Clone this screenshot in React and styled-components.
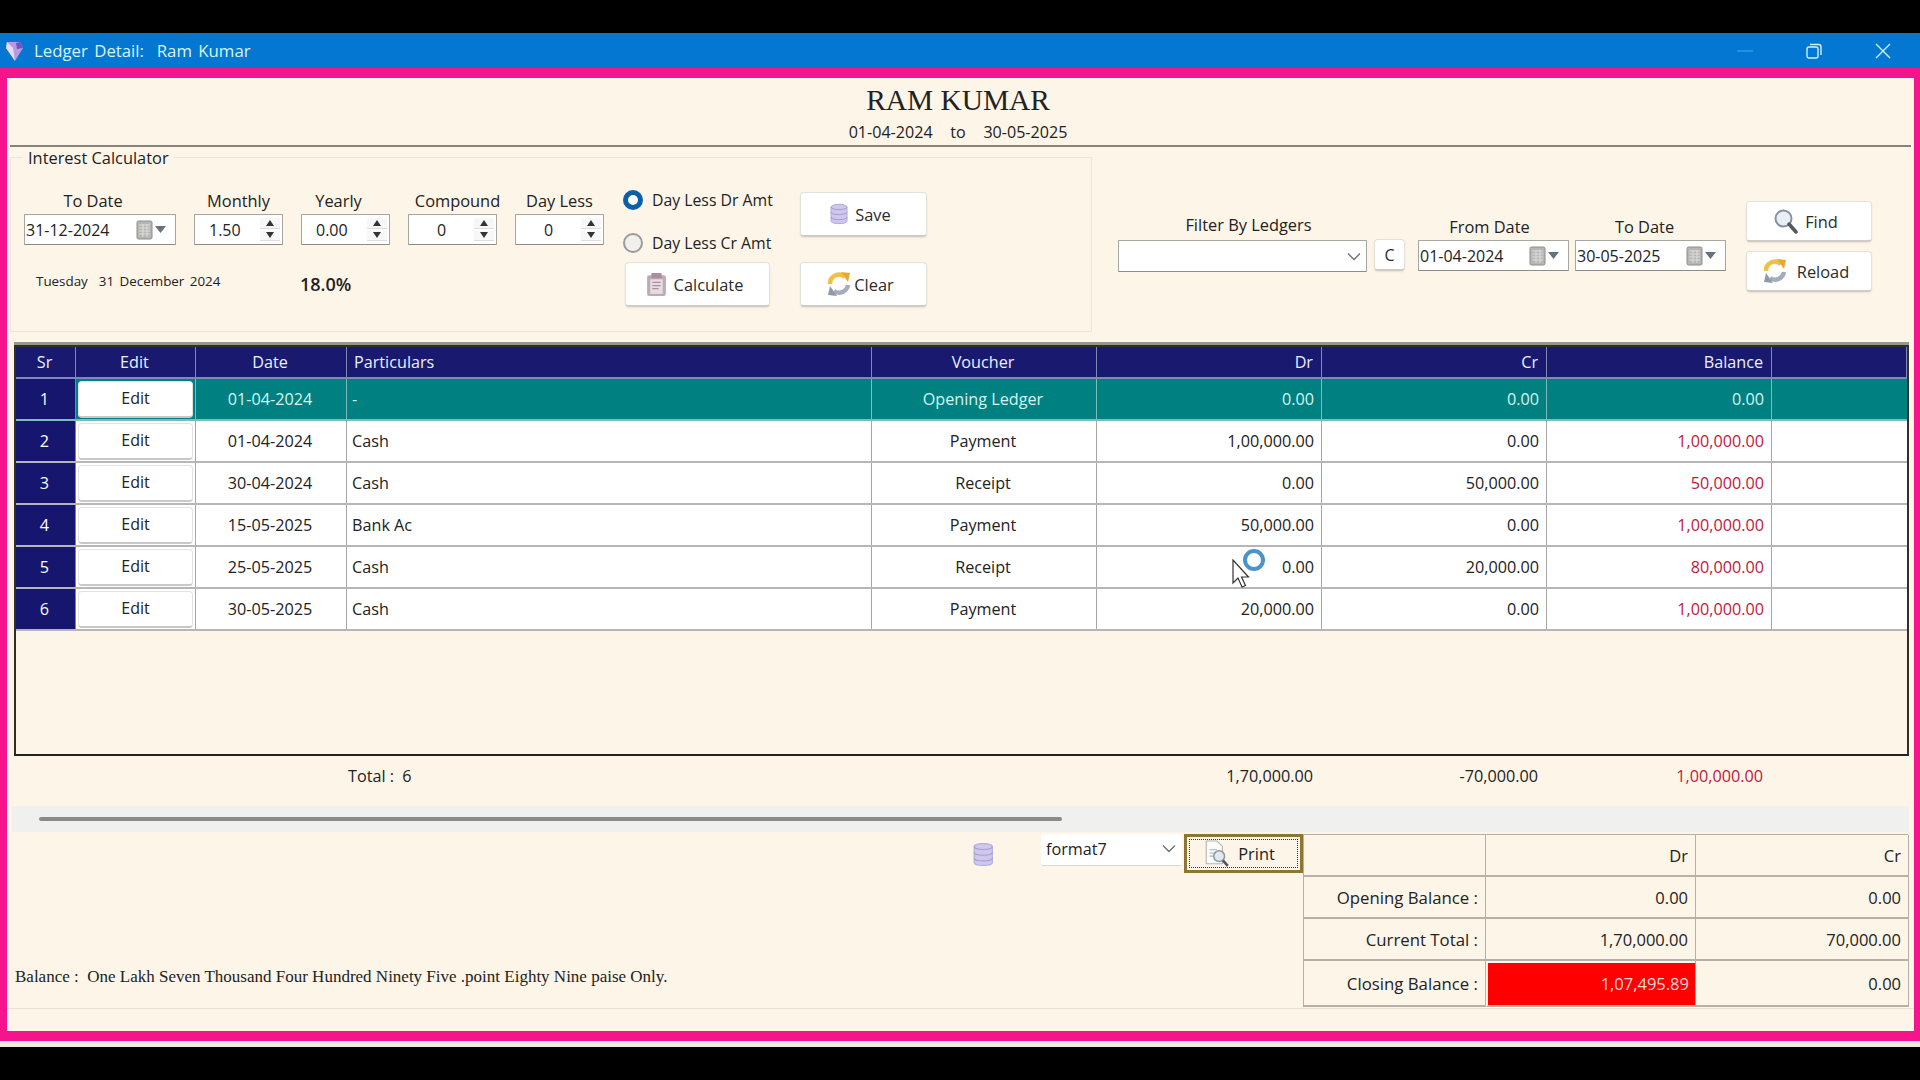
import React from 'react';
import styled, { createGlobalStyle } from 'styled-components';

const UI_FONT = '"Open Sans", "Noto Sans", sans-serif';
const COLS = '60px 120px 151px 525px 225px 225px 225px 225px 135px';

const Global = createGlobalStyle`
  html, body { margin: 0; padding: 0; background: #000; overflow: hidden; }
  * { box-sizing: border-box; }
  body { font-family: ${UI_FONT}; font-size: 16px; color: #222; }
`;

const Screen = styled.div`
  position: relative;
  width: 1920px;
  height: 1080px;
  background: #000;
  padding-top: 33px;
  display: flex;
  flex-direction: column;
`;

const TitleBar = styled.div`
  height: 35px;
  background: #0477d2;
  color: #d8f4ff;
  display: flex;
  align-items: center;
  padding-left: 4px;
  font-size: 16.8px;
`;

const TitleText = styled.span`
  margin-left: 10px;
  white-space: pre;
  word-spacing: 2px;
`;

const WinButtons = styled.div`
  margin-left: auto;
  display: flex;
  align-items: center;
  gap: 53px;
  padding-right: 29px;
`;

const Window = styled.div`
  height: 973px;
  background: #fdf5e8;
  border-style: solid;
  border-color: #f5148c;
  border-width: 10px 6px 10px 7px;
  display: flex;
  flex-direction: column;
`;

const BottomStrip = styled.div`
  height: 6px;
  background: #eee8e2;
`;

const Heading = styled.div`
  height: 69px;
  text-align: center;
  border-bottom: 2px solid #87827a;
  margin: 0 3px;
  padding-right: 5px;
`;

const Name = styled.div`
  font-family: "Liberation Serif", serif;
  font-size: 29.4px;
  line-height: 34px;
  padding-top: 5px;
  color: #222;
  height: 40px;
`;

const Period = styled.div`
  font-size: 16.1px;
  line-height: 20px;
  margin-top: 4px;
  word-spacing: 13.5px;
`;

const TopSection = styled.div`
  height: 195px;
  display: flex;
  align-items: flex-start;
  padding-left: 3px;
`;

const Calc = styled.fieldset`
  width: 1082px;
  height: 184px;
  margin: 1px 0 0;
  padding: 25px 0 0 13px;
  border: 1px solid #ebe5da;
  display: flex;
  min-width: 0;
`;

const CalcLegend = styled.legend`
  margin-left: -1px;
  padding: 1px 5px 0;
  font-size: 16.4px;
  line-height: 18px;
  color: #222;
`;

const CalcLeft = styled.div`
  width: 583px;
  display: flex;
  flex-direction: column;
`;

const Fields = styled.div`
  display: flex;
  gap: 18px;
`;

const Field = styled.div`
  width: ${(p) => p.$w}px;
  display: flex;
  flex-direction: column;
  align-items: center;
  gap: ${(p) => p.$gap || 4}px;
`;

const FieldLabel = styled.label`
  font-size: 16.4px;
  line-height: 18px;
  color: #222;
  white-space: nowrap;
  margin-left: ${(p) => (p.$nudge > 0 ? p.$nudge * 2 : 0)}px;
  margin-right: ${(p) => (p.$nudge < 0 ? -p.$nudge * 2 : 0)}px;
`;

const InputBox = styled.div`
  width: ${(p) => p.$w}px;
  height: ${(p) => p.$h || 31}px;
  background: #fff;
  border: 1px solid #a9a69f;
  border-bottom-color: #8f8c85;
  border-radius: 1px;
  display: flex;
  align-items: center;
  font-size: 16px;
  color: #222;
`;

const DateText = styled.span`
  flex: 1;
  padding-left: 1px;
`;

const SpinValue = styled.span`
  flex: 1;
  text-align: ${(p) => (p.$center ? 'center' : 'left')};
  padding-left: ${(p) => (p.$center ? '0' : '14px')};
`;

const SpinButtons = styled.div`
  width: 20px;
  height: 100%;
  margin-right: 2px;
  padding: 3px 0;
  display: flex;
  flex-direction: column;
  gap: 2px;
`;

const SpinArrow = styled.div`
  flex: 1;
  display: flex;
  align-items: center;
  justify-content: center;
  background: #f7f7f7;
  border-bottom: 1px solid #ddd;
  &::before {
    content: '';
    border-left: 4px solid transparent;
    border-right: 4px solid transparent;
    ${(p) => (p.$down ? 'border-top: 6px solid #333;' : 'border-bottom: 6px solid #333;')}
  }
`;

const InfoRow = styled.div`
  display: flex;
  align-items: flex-start;
  margin-top: 26px;
  padding-left: 12px;
`;

const DayText = styled.span`
  width: 264px;
  font-size: 13.4px;
  line-height: 20px;
  word-spacing: 2px;
  white-space: pre;
`;

const Rate = styled.span`
  font-size: 18px;
  font-weight: 600;
  line-height: 24px;
  margin-top: 1px;
`;

const CalcRight = styled.div`
  margin-left: 16px;
  display: grid;
  grid-template-columns: 177px 127px;
  grid-template-rows: 70px 45px;
`;

const RadioStack = styled.div`
  display: flex;
  flex-direction: column;
  gap: 21px;
  margin-top: -3px;
`;

const RadioRow = styled.div`
  display: flex;
  align-items: center;
  gap: 9px;
  font-size: 15.8px;
  height: 22px;
  white-space: nowrap;
`;

const Radio = styled.span`
  width: 20px;
  height: 20px;
  border-radius: 50%;
  background: ${(p) => (p.$on ? '#fff' : '#f2f0ec')};
  border: ${(p) => (p.$on ? '5px solid #0b5fa8' : '2px solid #9a9a98')};
`;

const Button = styled.button`
  width: ${(p) => p.$w}px;
  height: ${(p) => p.$h || 45}px;
  margin-left: ${(p) => p.$ml || 0}px;
  background: #fff;
  border: 1px solid #e4e1dc;
  border-bottom: 2px solid #cfccc6;
  border-radius: 4px;
  box-shadow: 0 1px 2px rgba(0, 0, 0, 0.08);
  display: flex;
  align-items: center;
  justify-content: center;
  gap: ${(p) => p.$gap || 7}px;
  font-family: ${UI_FONT};
  font-size: 16.4px;
  color: #2b2b2b;
  padding: 0 6px 0 0;
`;

const FilterFields = styled.div`
  display: flex;
  align-items: flex-start;
  margin: 69px 0 0 26px;
`;

const ClearFilter = styled(Button)`
  margin: 23px 13px 0 7px;
  font-size: 16px;
  padding: 0;
`;

const DateGroup = styled.div`
  display: flex;
  gap: 6px;
  padding-top: 2px;
`;

const ComboArrow = styled.span`
  margin-left: auto;
  padding-right: ${(p) => p.$pr || 5}px;
  display: flex;
`;

const FilterActions = styled.div`
  margin: 54px 0 0 20px;
  display: flex;
  flex-direction: column;
  gap: 9px;
`;

const GridFrame = styled.div`
  height: 411px;
  margin: 3px 5px 0 7px;
  border: 2px solid #2f2f2b;
  border-bottom-color: #222;
  box-shadow: 0 -3px 0 #98958e;
`;

const GridRow = styled.div`
  display: grid;
  grid-template-columns: ${COLS};
  height: ${(p) => p.$h || 42}px;
  background: ${(p) => p.$bg || '#fff'};
  color: ${(p) => p.$fg || '#222'};
  border-bottom: 2px solid ${(p) => p.$line || '#b6b6b6'};
`;

const Cell = styled.div`
  display: flex;
  align-items: center;
  justify-content: ${(p) => p.$justify || 'flex-start'};
  padding: ${(p) => p.$pad || '0 5px'};
  border-right: 1px solid ${(p) => p.$line || '#a6a6a6'};
  color: ${(p) => p.$color || 'inherit'};
  font-size: 16.2px;
  white-space: nowrap;
`;

const SrCell = styled(Cell)`
  background: #16166e;
  color: #fff;
  justify-content: center;
  padding: 0 2px 0 0;
  border-right-color: #7c80b0;
`;

const EditButton = styled.button`
  width: 115px;
  height: 37px;
  margin-top: 1px;
  background: #fff;
  border: 1px solid #e2e2e2;
  border-bottom: 2px solid #c8c8c8;
  border-radius: 4px;
  font-family: ${UI_FONT};
  font-size: 16px;
  color: #222;
  padding: 0 0 3px;
`;

const TotalsRow = styled.div`
  display: grid;
  grid-template-columns: ${COLS};
  height: 50px;
  padding: 0 0 10px 9px;
  align-items: center;
  font-size: 16.2px;
`;

const TotalValue = styled.div`
  grid-column: ${(p) => p.$col};
  text-align: ${(p) => (p.$left ? 'left' : 'right')};
  padding: ${(p) => (p.$left ? '0 0 0 1px' : '0 9px 0 0')};
  color: ${(p) => p.$color || '#222'};
  white-space: pre;
`;

const ScrollBand = styled.div`
  height: 26px;
  margin: 0 5px 0 5px;
  padding-left: 27px;
  background: #f0f0ef;
  display: flex;
  align-items: center;
`;

const ScrollThumb = styled.div`
  width: 1023px;
  height: 4px;
  background: #8b8b8b;
  border-radius: 2px;
`;

const BottomRow = styled.div`
  height: 177px;
  padding: 2px 6px 0 8px;
  display: flex;
  align-items: flex-start;
  border-bottom: 1px solid #e8e3da;
`;

const WordsNote = styled.div`
  flex: 1;
  align-self: flex-end;
  padding-bottom: 21px;
  font-family: "Liberation Serif", serif;
  font-size: 17px;
  color: #222;
  white-space: pre;
`;

const DbMark = styled.div`
  width: 68px;
  padding-top: 8px;
`;

const FormatSelect = styled.div`
  width: 141px;
  height: 32px;
  background: #fff;
  border-bottom: 1px solid #d8d8d8;
  border-radius: 2px;
  display: flex;
  align-items: center;
  padding: 0 0 2px 5px;
  font-size: 16.2px;
  color: #222;
`;

const PrintButton = styled.button`
  width: 119px;
  height: 39px;
  margin-left: 2px;
  border: 3px solid #8d7632;
  background: #fdf5e8;
  padding: 2px;
  font-family: ${UI_FONT};
  font-size: 16.4px;
  color: #222;
`;

const PrintInner = styled.span`
  height: 100%;
  border: 1.5px dotted #333;
  display: flex;
  align-items: center;
  justify-content: center;
  gap: 8px;
  padding-right: 8px;
`;

const SummaryTable = styled.div`
  width: 605px;
  display: grid;
  grid-template-columns: 182px 210px 213px;
  grid-template-rows: 42px 42px 42px 46px;
  border-left: 1px solid #b5b1a8;
  border-top: 1px solid #b5b1a8;
`;

const SummaryCell = styled.div`
  display: flex;
  align-items: center;
  justify-content: flex-end;
  padding: ${(p) => (p.$danger ? '0 6px 0 0' : '0 7px 0 0')};
  border-right: 1px solid #b5b1a8;
  border-bottom: 2px solid #b5b1a8;
  ${(p) => p.$danger && 'border-left: 2px solid #fdf5e8;'}
  background: ${(p) => (p.$danger ? 'linear-gradient(#fdf5e8 0 2px, #ff0000 2px)' : 'transparent')};
  color: ${(p) => (p.$danger ? '#ffd8d8' : '#222')};
  font-size: ${(p) => (p.$label ? 16.8 : 16.5)}px;
  white-space: nowrap;
`;

const Pointer = styled.svg`
  position: absolute;
  left: 1232px;
  top: 559px;
`;

const BusyRing = styled.div`
  position: absolute;
  left: 1243px;
  top: 549px;
  width: 22px;
  height: 22px;
  border-radius: 50%;
  border: 4px solid #4a94cc;
`;

const Gem = () => (
  <svg width="20" height="22" viewBox="0 0 20 22">
    <path d="M3 2 L16 2 L19 8 L11 21 L2 8 Z" fill="#b59be0" />
    <path d="M3 2 L9 8 L11 21 L2 8 Z" fill="#e6dcf8" />
    <path d="M12 3 L16 2 L19 8 L13 9 Z" fill="#7a4fc0" />
  </svg>
);

const RestoreIcon = () => (
  <svg width="16" height="16" viewBox="0 0 16 16" fill="none" stroke="#cdf3ff" strokeWidth="1.4">
    <rect x="1" y="4" width="11" height="11" rx="2" />
    <path d="M4 1.5 H12.5 A2.5 2.5 0 0 1 15 4 V12" />
  </svg>
);

const CloseIcon = () => (
  <svg width="16" height="16" viewBox="0 0 16 16" stroke="#cdf3ff" strokeWidth="1.4">
    <path d="M1 1 L15 15 M15 1 L1 15" />
  </svg>
);

const MinIcon = () => (
  <svg width="16" height="16" viewBox="0 0 16 16" stroke="#3f9fe6" strokeWidth="1.2">
    <path d="M0 8 H16" />
  </svg>
);

const CalendarPicker = () => (
  <svg width="30" height="20" viewBox="0 0 30 20" style={{ marginRight: 9 }}>
    <rect x="1" y="1" width="15" height="18" rx="1.5" fill="#b6b6b4" stroke="#8e8e8c" />
    <path d="M3 5 H14 M3 8 H14 M3 11 H14 M3 14 H14 M7 4 V17 M11 4 V17" stroke="#e4e4e2" strokeWidth="0.8" />
    <path d="M19 6 H30 L24.5 13 Z" fill="#66727c" />
  </svg>
);

const DbIcon = ({ size = 22 }) => (
  <svg width={size * 0.82} height={size} viewBox="0 0 18 22">
    <path d="M1 4 C1 0.5 17 0.5 17 4 V18 C17 21.5 1 21.5 1 18 Z" fill="#cfc8ec" stroke="#b3abdc" />
    <path d="M1 4 C1 7.5 17 7.5 17 4 M1 9 C1 12.5 17 12.5 17 9 M1 14 C1 17.5 17 17.5 17 14" fill="none" stroke="#a69ed4" />
  </svg>
);

const ClipboardIcon = () => (
  <svg width="21" height="25" viewBox="0 0 20 24">
    <rect x="1" y="3" width="18" height="20" rx="2" fill="#bfa9b5" />
    <rect x="5" y="1" width="10" height="5" rx="1" fill="#a88f9d" />
    <rect x="4" y="7" width="12" height="14" fill="#e8dce2" />
    <path d="M6 10 H14 M6 13 H14 M6 16 H12" stroke="#a88f9d" strokeWidth="1.2" />
  </svg>
);

const RefreshIcon = () => (
  <svg width="24" height="26" viewBox="0 0 24 26" fill="none">
    <path d="M3 13 A9 9 0 0 1 18 6" stroke="#f0bf45" strokeWidth="4.5" />
    <path d="M14 1 L23 2 L21 11 Z" fill="#e9a92e" />
    <path d="M21 14 A9 9 0 0 1 7 20" stroke="#a3adbb" strokeWidth="4.5" />
    <path d="M10 25 L1 24 L3 15 Z" fill="#8f9aa9" />
  </svg>
);

const LensIcon = () => (
  <svg width="24" height="25" viewBox="0 0 24 25" fill="none">
    <circle cx="9.5" cy="9.5" r="8" fill="#e8eff7" stroke="#8a9098" strokeWidth="2" />
    <path d="M15 15 L22 23" stroke="#555a60" strokeWidth="3.5" strokeLinecap="round" />
  </svg>
);

const PrintIcon = () => (
  <svg width="26" height="28" viewBox="0 0 24 26" fill="none">
    <path d="M2 1 H12 L17 6 V22 H2 Z" fill="#fbfbfa" stroke="#b4b4b0" />
    <path d="M5 9 H12 M5 12 H10 M5 15 H10" stroke="#a9b4c0" />
    <circle cx="14" cy="15" r="5" fill="#dfe9f2" stroke="#8d969e" strokeWidth="1.4" />
    <path d="M17.5 19 L22 24" stroke="#4f555b" strokeWidth="2.5" />
  </svg>
);

const Chevron = () => (
  <svg width="14" height="9" viewBox="0 0 14 9" fill="none" stroke="#6d6d6d" strokeWidth="1.3">
    <path d="M1 1.5 L7 7.5 L13 1.5" />
  </svg>
);

const DateInput = ({ value, width = 152 }) => (
  <InputBox $w={width}>
    <DateText>{value}</DateText>
    <CalendarPicker />
  </InputBox>
);

const Spin = ({ value, center }) => (
  <InputBox $w={89}>
    <SpinValue $center={center}>{value}</SpinValue>
    <SpinButtons>
      <SpinArrow />
      <SpinArrow $down />
    </SpinButtons>
  </InputBox>
);

const spins = [
  { label: 'Monthly', value: '1.50' },
  { label: 'Yearly', value: '0.00', nudge: -7 },
  { label: 'Compound', value: '0', center: true, nudge: 5 },
  { label: 'Day Less', value: '0', center: true },
];

const rows = [
  { sr: 1, date: '01-04-2024', name: '-', voucher: 'Opening Ledger', dr: '0.00', cr: '0.00', bal: '0.00' },
  { sr: 2, date: '01-04-2024', name: 'Cash', voucher: 'Payment', dr: '1,00,000.00', cr: '0.00', bal: '1,00,000.00' },
  { sr: 3, date: '30-04-2024', name: 'Cash', voucher: 'Receipt', dr: '0.00', cr: '50,000.00', bal: '50,000.00' },
  { sr: 4, date: '15-05-2025', name: 'Bank Ac', voucher: 'Payment', dr: '50,000.00', cr: '0.00', bal: '1,00,000.00' },
  { sr: 5, date: '25-05-2025', name: 'Cash', voucher: 'Receipt', dr: '0.00', cr: '20,000.00', bal: '80,000.00' },
  { sr: 6, date: '30-05-2025', name: 'Cash', voucher: 'Payment', dr: '20,000.00', cr: '0.00', bal: '1,00,000.00' },
];

const headers = [
  ['Sr', 'center'],
  ['Edit', 'center'],
  ['Date', 'center'],
  ['Particulars', 'flex-start'],
  ['Voucher', 'center'],
  ['Dr', 'flex-end'],
  ['Cr', 'flex-end'],
  ['Balance', 'flex-end'],
  ['', 'flex-start'],
];

const RIGHT_PAD = '0 7px 0 0';
const CENTER_PAD = '0 2px 0 0';
const HEAD_LINE = '#8088b4';

const headPad = (justify) => {
  if (justify === 'flex-end') return '0 8px 0 0';
  if (justify === 'center') return CENTER_PAD;
  return '0 7px';
};

export default function App() {
  return (
    <Screen>
      <Global />
      <TitleBar>
        <Gem />
        <TitleText>Ledger Detail:  Ram Kumar</TitleText>
        <WinButtons>
          <MinIcon />
          <RestoreIcon />
          <CloseIcon />
        </WinButtons>
      </TitleBar>
      <Window>
        <Heading>
          <Name>RAM KUMAR</Name>
          <Period>01-04-2024 to 30-05-2025</Period>
        </Heading>

        <TopSection>
          <Calc>
            <CalcLegend>Interest Calculator</CalcLegend>
            <CalcLeft>
              <Fields>
                <Field $w={152}>
                  <FieldLabel $nudge={-7}>To Date</FieldLabel>
                  <DateInput value="31-12-2024" />
                </Field>
                {spins.map((s) => (
                  <Field key={s.label} $w={89}>
                    <FieldLabel $nudge={s.nudge}>{s.label}</FieldLabel>
                    <Spin value={s.value} center={s.center} />
                  </Field>
                ))}
              </Fields>
              <InfoRow>
                <DayText>Tuesday  31 December 2024</DayText>
                <Rate>18.0%</Rate>
              </InfoRow>
            </CalcLeft>
            <CalcRight>
              <RadioStack>
                <RadioRow>
                  <Radio $on />
                  Day Less Dr Amt
                </RadioRow>
                <RadioRow>
                  <Radio />
                  Day Less Cr Amt
                </RadioRow>
              </RadioStack>
              <Button $w={127}>
                <DbIcon />
                Save
              </Button>
              <Button $w={145} $ml={2}>
                <ClipboardIcon />
                Calculate
              </Button>
              <Button $w={127} $gap={3}>
                <RefreshIcon />
                Clear
              </Button>
            </CalcRight>
          </Calc>

          <FilterFields>
            <Field $gap={6} $w={249}>
              <FieldLabel $nudge={6}>Filter By Ledgers</FieldLabel>
              <InputBox $w={249} $h={32}>
                <ComboArrow>
                  <Chevron />
                </ComboArrow>
              </InputBox>
            </Field>
            <ClearFilter $w={31} $h={32}>C</ClearFilter>
            <DateGroup>
              <Field $gap={4} $w={151}>
                <FieldLabel $nudge={-4}>From Date</FieldLabel>
                <DateInput value="01-04-2024" width={151} />
              </Field>
              <Field $gap={4} $w={151}>
                <FieldLabel $nudge={-6}>To Date</FieldLabel>
                <DateInput value="30-05-2025" width={151} />
              </Field>
            </DateGroup>
          </FilterFields>

          <FilterActions>
            <Button $w={126} $h={41}>
              <LensIcon />
              Find
            </Button>
            <Button $w={126} $h={41} $gap={10}>
              <RefreshIcon />
              Reload
            </Button>
          </FilterActions>
        </TopSection>

        <GridFrame>
          <GridRow $h={32} $bg="#191970" $fg="#eaf0ff" $line={HEAD_LINE}>
            {headers.map(([label, justify], i) => (
              <Cell key={i} $justify={justify} $line={HEAD_LINE} $pad={headPad(justify)}>
                {label}
              </Cell>
            ))}
          </GridRow>
          {rows.map((r, i) => {
            const first = i === 0;
            const line = first ? '#7cbcbc' : undefined;
            return (
              <GridRow key={r.sr} $bg={first ? '#008080' : '#fff'} $fg={first ? '#d5f5f2' : '#222'} $line={line}>
                <SrCell>{r.sr}</SrCell>
                <Cell $justify="center" $pad="0" $line={line}>
                  <EditButton>Edit</EditButton>
                </Cell>
                <Cell $justify="center" $pad={CENTER_PAD} $line={line}>{r.date}</Cell>
                <Cell $line={line}>{r.name}</Cell>
                <Cell $justify="center" $pad={CENTER_PAD} $line={line}>{r.voucher}</Cell>
                <Cell $justify="flex-end" $pad={RIGHT_PAD} $line={line}>{r.dr}</Cell>
                <Cell $justify="flex-end" $pad={RIGHT_PAD} $line={line}>{r.cr}</Cell>
                <Cell $justify="flex-end" $pad={RIGHT_PAD} $line={line} $color={first ? undefined : '#c2183c'}>
                  {r.bal}
                </Cell>
                <Cell $line="transparent" />
              </GridRow>
            );
          })}
        </GridFrame>

        <TotalsRow>
          <TotalValue $col={4} $left>Total :  6</TotalValue>
          <TotalValue $col={6}>1,70,000.00</TotalValue>
          <TotalValue $col={7}>-70,000.00</TotalValue>
          <TotalValue $col={8} $color="#c2183c">1,00,000.00</TotalValue>
        </TotalsRow>

        <ScrollBand>
          <ScrollThumb />
        </ScrollBand>

        <BottomRow>
          <WordsNote>Balance :  One Lakh Seven Thousand Four Hundred Ninety Five .point Eighty Nine paise Only.</WordsNote>
          <DbMark>
            <DbIcon size={25} />
          </DbMark>
          <FormatSelect>
            format7
            <ComboArrow $pr={6}>
              <Chevron />
            </ComboArrow>
          </FormatSelect>
          <PrintButton>
            <PrintInner>
              <PrintIcon />
              Print
            </PrintInner>
          </PrintButton>
          <SummaryTable>
            <SummaryCell />
            <SummaryCell>Dr</SummaryCell>
            <SummaryCell>Cr</SummaryCell>
            <SummaryCell $label>Opening Balance :</SummaryCell>
            <SummaryCell>0.00</SummaryCell>
            <SummaryCell>0.00</SummaryCell>
            <SummaryCell $label>Current Total :</SummaryCell>
            <SummaryCell>1,70,000.00</SummaryCell>
            <SummaryCell>70,000.00</SummaryCell>
            <SummaryCell $label>Closing Balance :</SummaryCell>
            <SummaryCell $danger>1,07,495.89</SummaryCell>
            <SummaryCell>0.00</SummaryCell>
          </SummaryTable>
        </BottomRow>
      </Window>
      <BottomStrip />

      <Pointer width="18" height="30" viewBox="0 0 18 30">
        <path d="M1 1 V24 L6 19 L10 28 L13.5 26.5 L9.5 18 H16.5 Z" fill="#fff" stroke="#333" strokeWidth="1.2" />
      </Pointer>
      <BusyRing />
    </Screen>
  );
}
